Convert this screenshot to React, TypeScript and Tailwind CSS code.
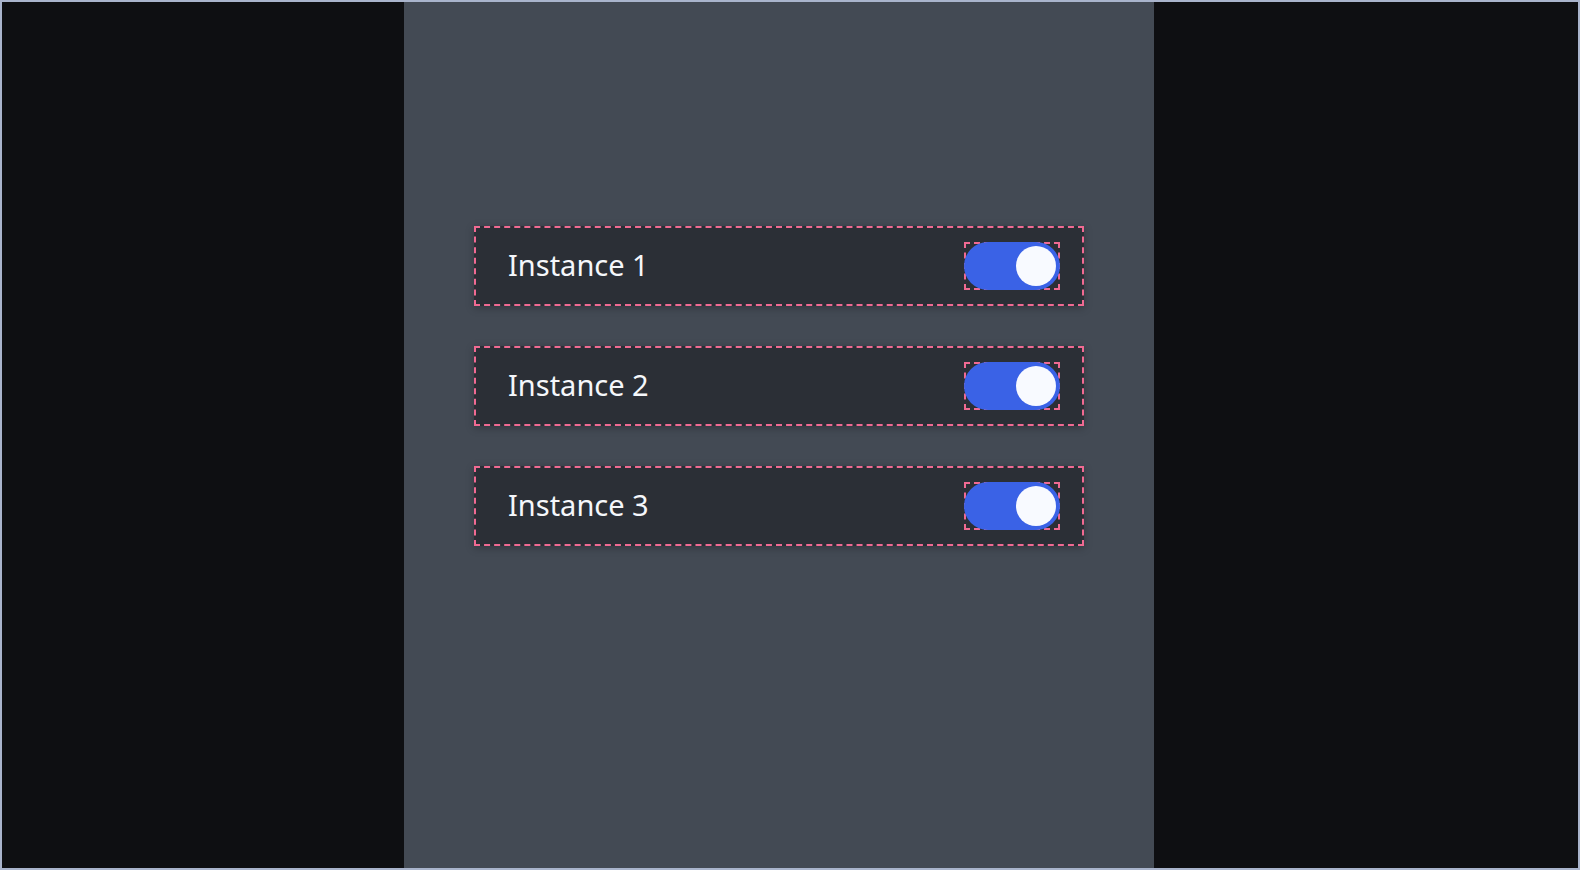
import { useState } from 'react';

const INSTANCES = ['Instance 1', 'Instance 2', 'Instance 3'];

function Toggle({ on, onChange }: { on: boolean; onChange: () => void }) {
  return (
    <div className="relative w-[96px] h-[48px] border-2 border-dashed border-[#f06a92]">
      <button
        onClick={onChange}
        className={`absolute -inset-[2px] rounded-full flex items-center px-[4px] transition-colors ${
          on ? 'bg-[#3a62e6] justify-end' : 'bg-[#5a616c] justify-start'
        }`}
      >
        <span className="w-[40px] h-[40px] rounded-full bg-[#f8faff]" />
      </button>
    </div>
  );
}

function InstanceRow({ label }: { label: string }) {
  const [on, setOn] = useState(true);

  return (
    <div className="w-[610px] h-[80px] flex items-center justify-between pl-[32px] pr-[22px] bg-[#2b2f36] border-2 border-dashed border-[#f06a92] shadow-[0_2px_8px_rgba(0,0,0,0.25)]">
      <span className="text-[29px] leading-none pb-[3px] text-[#f5f7fb] font-['Noto_Sans',sans-serif]">
        {label}
      </span>
      <Toggle on={on} onChange={() => setOn(!on)} />
    </div>
  );
}

export default function App() {
  return (
    <div className="w-[1580px] h-[870px] flex border-2 border-[#a9b4cc] bg-[#0e0f12]">
      <div className="w-[402px] shrink-0" />
      <div className="w-[750px] shrink-0 bg-[#434a54] pt-[224px] flex flex-col items-center gap-[40px]">
        {INSTANCES.map((label) => (
          <InstanceRow key={label} label={label} />
        ))}
      </div>
      <div className="flex-1" />
    </div>
  );
}
